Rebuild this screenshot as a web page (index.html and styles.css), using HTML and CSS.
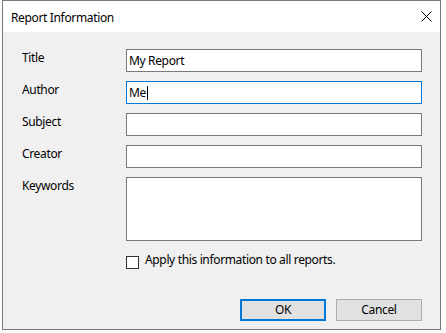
FILE: index.html
```html
<!DOCTYPE html>
<html>
<head>
<meta charset="utf-8">
<link rel="stylesheet" href="styles.css">
</head>
<body>
<div class="window">
  <div class="titlebar">
    <span class="title">Report Information</span>
    <svg class="close" width="11" height="11" viewBox="0 0 11 11"><path d="M0.5 0.5 L10.5 10.5 M10.5 0.5 L0.5 10.5" stroke="#000" stroke-width="1" fill="none"/></svg>
  </div>
  <div class="client">
    <div class="form">
      <span class="label">Title</span>
      <div class="field">My Report</div>
      <span class="label">Author</span>
      <div class="field focused">Me<span class="caret"></span></div>
      <span class="label">Subject</span>
      <div class="field"></div>
      <span class="label">Creator</span>
      <div class="field"></div>
      <span class="label">Keywords</span>
      <div class="field area"></div>
    </div>
    <div class="check-row">
      <span class="checkbox"></span>
      <span class="check-text">Apply this information to all reports.</span>
    </div>
    <div class="buttons">
      <div class="btn default">OK</div>
      <div class="btn">Cancel</div>
    </div>
  </div>
</div>
</body>
</html>
```
FILE: styles.css
```css
html, body {
  margin: 0;
  padding: 0;
  background: #fbfbfb;
}
body {
  font-family: "Segoe UI", "Noto Sans", sans-serif;
  font-size: 12px;
  line-height: 16px;
  letter-spacing: -0.35px;
  color: #000;
}
.window {
  margin-left: 2px;
  width: 439px;
  height: 330px;
  box-sizing: border-box;
  border: 1px solid #7a7a7a;
  background: #f0f0f0;
  display: flex;
  flex-direction: column;
}
.titlebar {
  height: 31px;
  background: #fff;
  display: flex;
  align-items: center;
  justify-content: space-between;
  padding: 2px 8px 0 8px;
  box-sizing: border-box;
}
.close {
  margin-top: -2px;
}
.client {
  padding: 17px 0 0 19px;
  display: flex;
  flex-direction: column;
}
.form {
  display: grid;
  grid-template-columns: 104px 296px;
  grid-template-rows: 23px 23px 23px 23px 64px;
  row-gap: 9px;
}
.label {
  align-self: start;
  padding-top: 1px;
}
.field {
  box-sizing: border-box;
  border: 1px solid #7a7a7a;
  background: #fff;
  padding: 3px 2px;
  display: flex;
  align-items: flex-start;
}
.field.focused {
  border-color: #0078d7;
}
.caret {
  display: inline-block;
  width: 1px;
  height: 14px;
  background: #000;
  margin-top: 1px;
  margin-left: 1px;
}
.check-row {
  margin-top: 11px;
  margin-left: 104px;
  display: flex;
  align-items: flex-start;
}
.checkbox {
  width: 13px;
  height: 13px;
  box-sizing: border-box;
  border: 1px solid #333;
  background: #fff;
  margin-top: 4px;
}
.check-text {
  margin-left: 6px;
}
.buttons {
  margin-top: 30px;
  display: flex;
  justify-content: flex-end;
  gap: 10px;
  padding-right: 18px;
}
.btn {
  width: 86px;
  height: 22px;
  box-sizing: border-box;
  border: 1px solid #adadad;
  background: #e1e1e1;
  display: flex;
  align-items: center;
  justify-content: center;
}
.btn.default {
  border: 2px solid #0078d7;
}
```
